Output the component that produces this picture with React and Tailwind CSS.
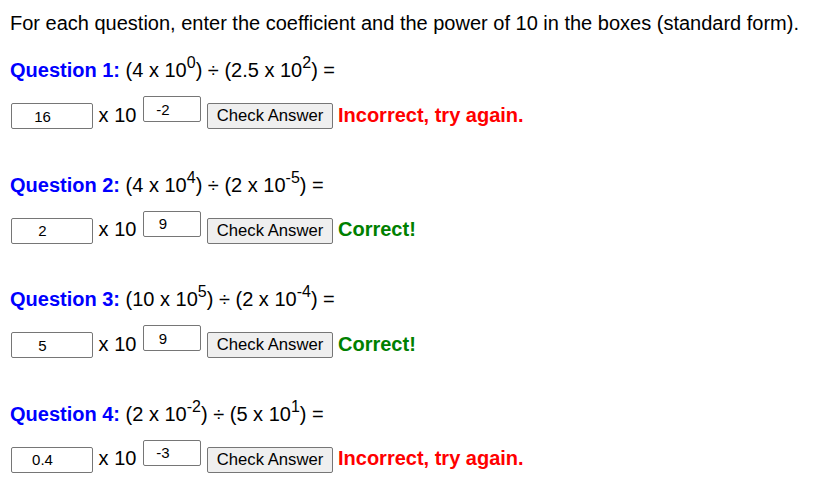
import React, { useState } from "react";

const questions = [
  { id: 1, a: ["4", "0"], b: ["2.5", "2"], coef: "16", exp: "-2", answer: [1.6, -2], result: "wrong" },
  { id: 2, a: ["4", "4"], b: ["2", "-5"], coef: "2", exp: "9", answer: [2, 9], result: "right" },
  { id: 3, a: ["10", "5"], b: ["2", "-4"], coef: "5", exp: "9", answer: [5, 9], result: "right" },
  { id: 4, a: ["2", "-2"], b: ["5", "1"], coef: "0.4", exp: "-3", answer: [4, -4], result: "wrong" },
];

const Sup = ({ children }) => (
  <sup className="relative -top-[9px] align-baseline text-[16px] leading-[0]">{children}</sup>
);

const Question = ({ q }) => {
  const [coef, setCoef] = useState(q.coef);
  const [exp, setExp] = useState(q.exp);
  const [result, setResult] = useState(q.result);

  const check = () => {
    const ok = parseFloat(coef) === q.answer[0] && parseInt(exp, 10) === q.answer[1];
    setResult(ok ? "right" : "wrong");
  };

  return (
    <div className="flex flex-col">
      <p className="h-[23px] leading-[23px] whitespace-nowrap">
        <span className="font-bold text-[#0000ff]">Question {q.id}:</span> ({q.a[0]} x 10<Sup>{q.a[1]}</Sup>) ÷ ({q.b[0]} x 10<Sup>{q.b[1]}</Sup>) =
      </p>
      <div className="mt-[14px] flex h-[33px] items-end">
        <input
          type="text"
          value={coef}
          onChange={(e) => setCoef(e.target.value)}
          className="ml-[1px] h-[26px] w-[82px] rounded-[2px] border border-[#767676] bg-white pl-[2px] pr-[21px] text-center text-[15px] outline-none"
        />
        <span className="mb-[2.5px] ml-[5.6px] leading-[23px]">x 10</span>
        <input
          type="text"
          value={exp}
          onChange={(e) => setExp(e.target.value)}
          className="mb-[7px] ml-[6.6px] h-[26px] w-[58px] rounded-[2px] border border-[#767676] bg-white pl-[2px] pr-[20px] text-center text-[15px] outline-none"
        />
        <button
          onClick={check}
          className="ml-[6px] h-[26px] w-[126px] rounded-[2px] border border-[#767676] bg-[#efefef] text-center text-[16.67px] leading-[24px] text-black"
        >
          Check Answer
        </button>
        {result === "right" && (
          <span className="mb-[2.5px] ml-[5px] font-bold leading-[23px] text-[#008000]">Correct!</span>
        )}
        {result === "wrong" && (
          <span className="mb-[2.5px] ml-[5px] font-bold leading-[23px] text-[#ff0000]">Incorrect, try again.</span>
        )}
      </div>
    </div>
  );
};

export default function App() {
  return (
    <div className="min-h-[493px] w-[813px] bg-white px-[10px] pt-[12px] font-['Liberation_Sans',Arial,sans-serif] text-[20px] text-black">
      <p className="h-[23px] leading-[23px] whitespace-nowrap">
        For each question, enter the coefficient and the power of 10 in the boxes (standard form).
      </p>
      <div className="mt-[24px] flex flex-col gap-[44.67px]">
        {questions.map((q) => (
          <Question key={q.id} q={q} />
        ))}
      </div>
    </div>
  );
}
